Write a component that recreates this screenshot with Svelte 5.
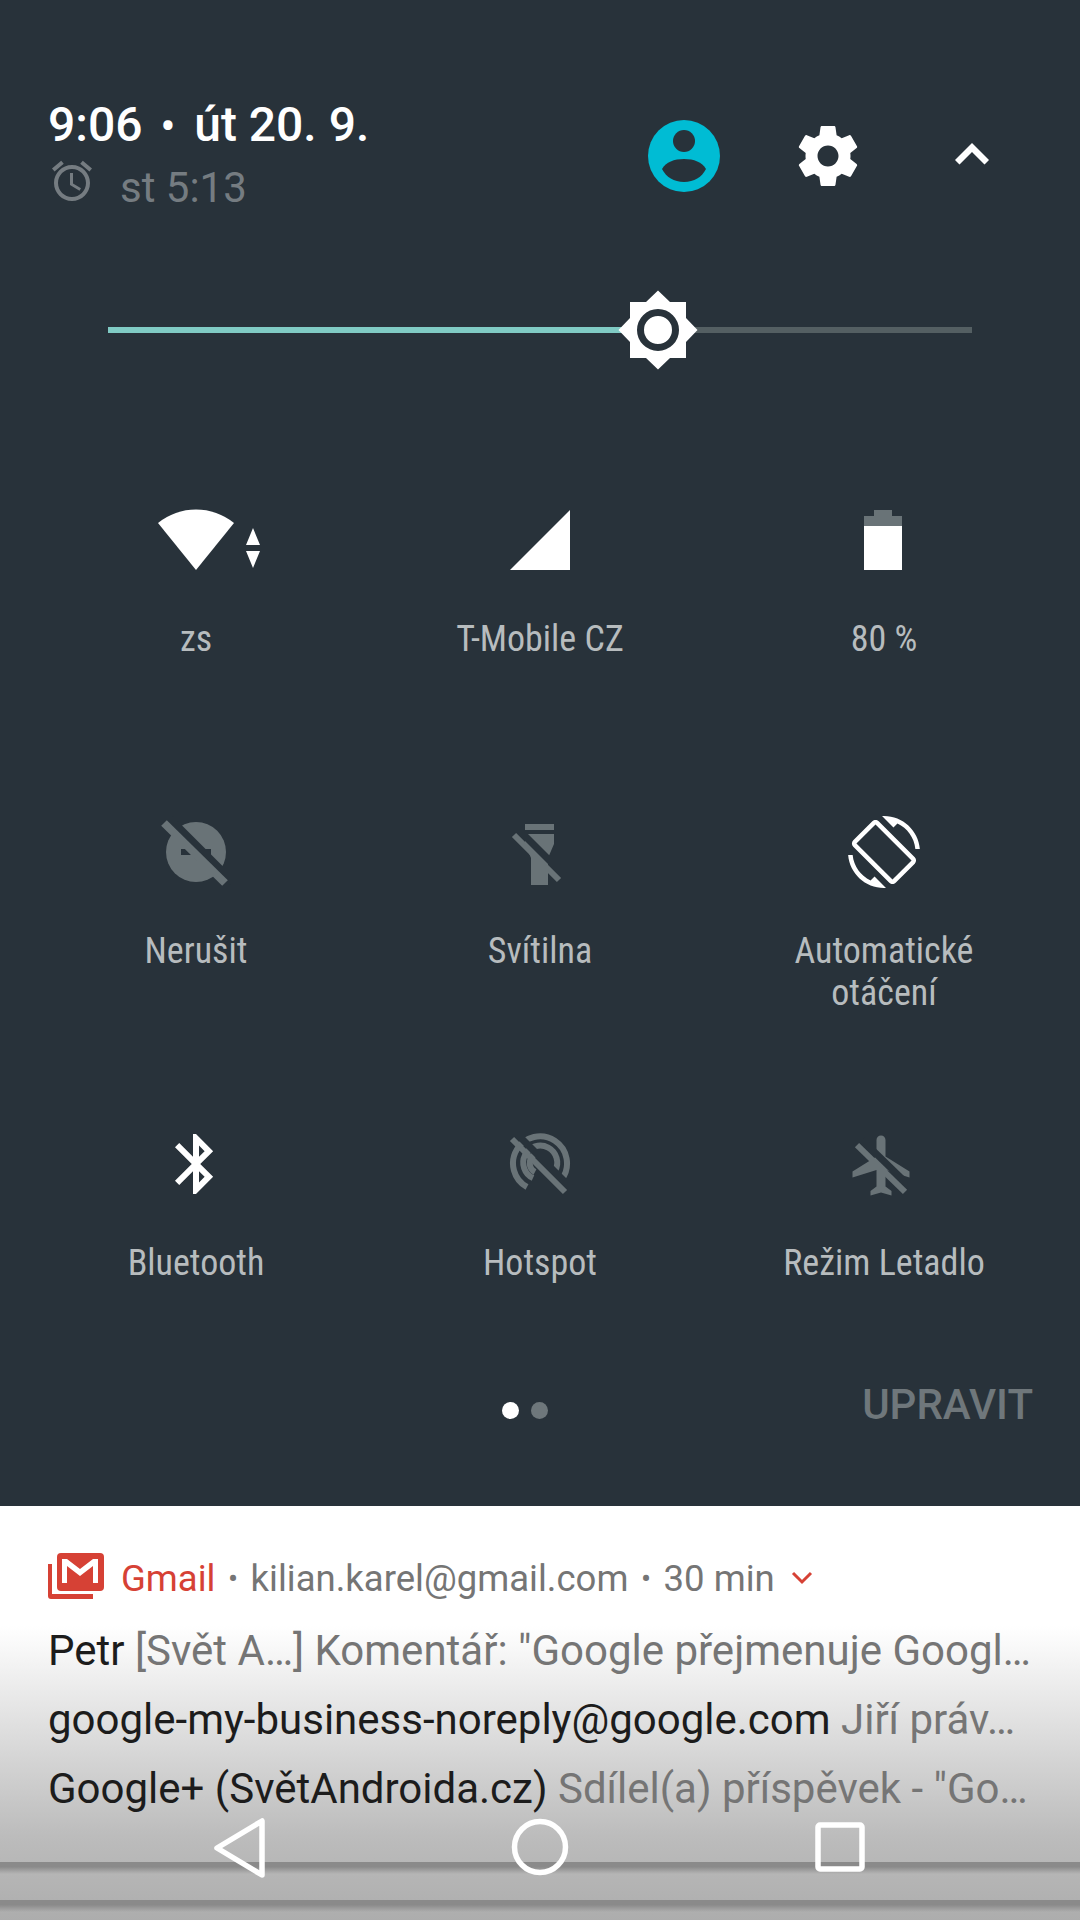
<script>
  const tiles = [
    { id: "wifi", label: "zs" },
    { id: "signal", label: "T-Mobile CZ" },
    { id: "battery", label: "80 %" },
    { id: "dnd", label: "Nerušit" },
    { id: "flash", label: "Svítilna" },
    { id: "rotate", label: "Automatické otáčení" },
    { id: "bluetooth", label: "Bluetooth" },
    { id: "hotspot", label: "Hotspot" },
    { id: "plane", label: "Režim Letadlo" },
  ];
  const rows = [
    { from: "Petr", text: "[Svět A…] Komentář: \"Google přejmenuje Googl…" },
    { from: "google-my-business-noreply@google.com", text: "Jiří práv…" },
    { from: "Google+ (SvětAndroida.cz)", text: "Sdílel(a) příspěvek - \"Go…" },
  ];
</script>

<div class="screen">
  <section class="panel">
    <header class="header">
      <div class="clock">
        <div class="time">9:06<span class="sep">•</span>út 20. 9.</div>
        <div class="alarm">
          <svg viewBox="0 0 24 24" width="48" height="48" fill="#757c81"><path d="M22 5.72l-4.6-3.86-1.29 1.53 4.6 3.86L22 5.72zM7.88 3.39L6.6 1.86 2 5.71l1.29 1.53 4.59-3.85zM12.5 8H11v6l4.75 2.85.75-1.23-4-2.37V8zM12 4c-4.97 0-9 4.03-9 9s4.02 9 9 9c4.97 0 9-4.03 9-9s-4.03-9-9-9zm0 16c-3.87 0-7-3.13-7-7s3.13-7 7-7 7 3.13 7 7-3.13 7-7 7z"/></svg>
          <span>st 5:13</span>
        </div>
      </div>
      <div class="actions">
        <svg viewBox="0 0 72 72" width="72" height="72">
          <circle cx="36" cy="36" r="36" fill="#00bcd4"/>
          <circle cx="36" cy="21" r="11" fill="#28323a"/>
          <path d="M14 49C18 42 26 39 36 39S54 42 58 49C54 57 46 62 36 62S18 57 14 49Z" fill="#28323a"/>
        </svg>
        <svg viewBox="0 0 24 24" width="72" height="72" fill="#fff"><path d="M19.43 12.98c.04-.32.07-.64.07-.98s-.03-.66-.07-.98l2.11-1.65c.19-.15.24-.42.12-.64l-2-3.46c-.12-.22-.39-.3-.61-.22l-2.49 1c-.52-.4-1.08-.73-1.69-.98l-.38-2.65C14.46 2.18 14.25 2 14 2h-4c-.25 0-.46.18-.49.42l-.38 2.65c-.61.25-1.17.59-1.69.98l-2.49-1c-.23-.09-.49 0-.61.22l-2 3.46c-.13.22-.07.49.12.64l2.11 1.65c-.04.32-.07.65-.07.98s.03.66.07.98l-2.11 1.65c-.19.15-.24.42-.12.64l2 3.46c.12.22.39.3.61.22l2.49-1c.52.4 1.08.73 1.69.98l.38 2.65c.03.24.24.42.49.42h4c.25 0 .46-.18.49-.42l.38-2.65c.61-.25 1.17-.59 1.69-.98l2.49 1c.23.09.49 0 .61-.22l2-3.46c.12-.22.07-.49-.12-.64l-2.11-1.65zM12 15.5c-1.93 0-3.5-1.57-3.5-3.5s1.57-3.5 3.5-3.5 3.5 1.57 3.5 3.5-1.57 3.5-3.5 3.5z"/></svg>
        <svg viewBox="0 0 72 72" width="72" height="72" fill="#fff"><path d="M36 23 53 40 48.500 44.500 36 32 23.500 44.500 19 40Z"/></svg>
      </div>
    </header>

    <div class="slider">
      <div class="track-on"></div>
      <div class="track-off"></div>
      <svg class="thumb" viewBox="0 0 80 80" width="80" height="80">
        <path d="M40 0.500 52 12H68V28L79.500 40 68 52V68H52L40 79.500 28 68H12V52L0.500 40 12 28V12H28Z" fill="#fff"/>
        <circle cx="40" cy="40" r="17.500" fill="#fff" stroke="#28323a" stroke-width="7"/>
      </svg>
    </div>

    <div class="tiles">
      {#each tiles as t}
        <div class="tile">
          <div class="icon">
            {#if t.id === "wifi"}
              <svg viewBox="0 0 72 72" width="72" height="72" fill="#fff">
                <path d="M36 66 -2 19A60.400 60.400 0 0 1 74 19Z"/>
                <path d="M93 24 100 41H86ZM86 47H100L93 64Z"/>
              </svg>
            {:else if t.id === "signal"}
              <svg viewBox="0 0 72 72" width="72" height="72" fill="#fff"><path d="M6 66 66 6V66Z"/></svg>
            {:else if t.id === "battery"}
              <svg viewBox="0 0 72 72" width="72" height="72">
                <path d="M26 6H44V12H54V22H16V12H26Z" fill="#697377"/>
                <rect x="16" y="22" width="38" height="44" fill="#fff"/>
              </svg>
            {:else if t.id === "dnd"}
              <svg viewBox="0 0 72 72" width="72" height="72">
                <circle cx="36" cy="36" r="30" fill="#697377"/>
                <path d="M21 33H51V39H21Z" fill="#28323a"/>
                <path d="M10 3 73 66" stroke="#28323a" stroke-width="8"/>
                <path d="M4 7 65 67" stroke="#697377" stroke-width="8"/>
              </svg>
            {:else if t.id === "flash"}
              <svg viewBox="0 0 72 72" width="72" height="72">
                <path d="M21 8H50V14H21ZM21 18H50V28L44 42V69H27V42L21 28Z" fill="#697377"/>
                <path d="M15 14 60 59" stroke="#28323a" stroke-width="7"/>
                <path d="M10 19 55 64" stroke="#697377" stroke-width="6"/>
              </svg>
            {:else if t.id === "rotate"}
              <svg viewBox="0 0 24 24" width="72" height="72" fill="#fff"><path d="M16.48 2.52c3.27 1.55 5.61 4.72 5.97 8.48h1.5C23.44 4.84 18.29 0 12 0l-.66.03 3.81 3.81 1.33-1.32zm-6.25-.77c-.59-.59-1.54-.59-2.12 0L1.75 8.11c-.59.59-.59 1.54 0 2.12l12.02 12.02c.59.59 1.54.59 2.12 0l6.36-6.36c.59-.59.59-1.54 0-2.12L10.23 1.75zm4.6 19.44L2.81 9.17l6.36-6.36 12.02 12.02-6.36 6.36zm-7.31.29C4.25 19.94 1.91 16.76 1.55 13H.05C.56 19.16 5.71 24 12 24l.66-.03-3.81-3.81-1.33 1.32z"/></svg>
            {:else if t.id === "bluetooth"}
              <svg viewBox="0 0 24 24" width="72" height="72" fill="#fff"><path d="M17.71 7.71L12 2h-1v7.59L6.41 5 5 6.41 10.59 12 5 17.59 6.41 19 11 14.41V22h1l5.71-5.71-4.3-4.29 4.3-4.29zM13 5.83l1.88 1.88L13 9.59V5.83zm1.88 10.46L13 18.17v-3.76l1.88 1.88z"/></svg>
            {:else if t.id === "hotspot"}
              <svg viewBox="0 0 72 72" width="72" height="72" fill="none" stroke="#697377" stroke-width="6">
                <path d="M23 59A27 27 0 1 1 58 51"/>
                <path d="M29 50A17 17 0 1 1 51 43"/>
                <path d="M31 44A10 10 0 0 1 30 27"/>
                <path d="M13 6 66 59" stroke="#28323a" stroke-width="7"/>
                <path d="M8 11 61 64"/>
              </svg>
            {:else if t.id === "plane"}
              <svg viewBox="0 0 24 24" width="72" height="72">
                <path d="M21 16v-2l-8-5V3.500c0-.83-.67-1.500-1.500-1.500S10 2.670 10 3.500V9l-8 5v2l8-2.500V19l-2 1.500V22l3.500-1 3.500 1v-1.500L13 19v-5.500l8 2.500z" fill="#697377" transform="translate(-.5 .5)"/>
                <path d="M4.700 4 20.700 19.600" stroke="#28323a" stroke-width="2.300"/>
                <path d="M3 5.700 19 21.300" stroke="#697377" stroke-width="2"/>
              </svg>
            {/if}
          </div>
          <div class="label">{t.label}</div>
        </div>
      {/each}
    </div>

    <footer class="panel-foot">
      <div class="dots"><i class="on"></i><i></i></div>
      <span class="edit">UPRAVIT</span>
    </footer>
  </section>

  <section class="notif">
    <div class="notif-head">
      <svg viewBox="0 0 56 48" width="56" height="48">
        <path d="M0 11H4V41H45V46H3Q0 46 0 43Z" fill="#d64135"/>
        <rect x="9" y="0" width="47" height="38" rx="4" fill="#d64135"/>
        <path d="M14 30V6H19L32 16 45 6H50V30H45V13L32 23 19 13V30Z" fill="#fff"/>
      </svg>
      <span class="app">Gmail</span>
      <span class="dot">•</span>
      <span>kilian.karel@gmail.com</span>
      <span class="dot">•</span>
      <span>30 min</span>
      <svg class="caret" viewBox="0 0 24 16" width="24" height="16"><path d="M3 3 12 12 21 3" fill="none" stroke="#d64135" stroke-width="3"/></svg>
    </div>
    {#each rows as r}
      <div class="row"><span class="from">{r.from}</span> {r.text}</div>
    {/each}
  </section>

  <div class="band band-a"></div>
  <div class="band band-b"></div>

  <nav class="navbar">
    <svg viewBox="0 0 60 64" width="60" height="64"><path d="M52 4V58L7 31Z" fill="none" stroke="#fff" stroke-width="5.500" stroke-linejoin="round"/></svg>
    <svg viewBox="0 0 60 60" width="60" height="60"><circle cx="30" cy="30" r="25.500" fill="none" stroke="#fff" stroke-width="5.500"/></svg>
    <svg viewBox="0 0 60 60" width="60" height="60"><rect x="8" y="8" width="44" height="44" rx="2" fill="none" stroke="#fff" stroke-width="5.500"/></svg>
  </nav>
</div>

<style>
  :global(body) {
    margin: 0;
    background: #28323a;
  }
  .screen {
    position: relative;
    width: 1080px;
    height: 1920px;
    overflow: hidden;
    display: flex;
    flex-direction: column;
    font-family: Roboto, "Liberation Sans", sans-serif;
  }
  .panel {
    height: 1506px;
    flex: none;
    background: #28323a;
    box-sizing: border-box;
    padding-top: 96px;
  }
  .header {
    display: flex;
    justify-content: space-between;
    padding: 0 72px 0 48px;
    height: 116px;
  }
  .time {
    color: #fff;
    font-size: 48px;
    font-weight: 500;
    line-height: 58px;
  }
  .sep {
    margin: 0 19px 0 18px;
    font-size: 42px;
  }
  .alarm {
    display: flex;
    align-items: center;
    color: #757c81;
    font-size: 42px;
    line-height: 50px;
    margin-top: 7px;
  }
  .alarm svg {
    margin-right: 24px;
    margin-top: -15px;
  }
  .actions {
    display: flex;
    gap: 72px;
    padding-top: 24px;
  }
  .slider {
    position: relative;
    display: flex;
    margin: 115px 108px 0;
    height: 6px;
  }
  .track-on {
    flex: none;
    width: 515px;
    background: #80cbc4;
  }
  .track-off {
    flex: 1;
    background: #545f62;
  }
  .thumb {
    position: absolute;
    left: 510px;
    top: -37px;
  }
  .tiles {
    display: grid;
    grid-template-columns: repeat(3, 344px);
    grid-auto-rows: 312px;
    margin: 171px 0 0 24px;
  }
  .tile {
    display: flex;
    flex-direction: column;
    align-items: center;
  }
  .icon {
    width: 72px;
    height: 72px;
  }
  .icon svg {
    display: block;
    overflow: visible;
  }
  .label {
    margin-top: 42px;
    width: 240px;
    text-align: center;
    color: #b7bcbe;
    font-size: 36px;
    line-height: 42px;
    font-stretch: 75%;
  }
  .panel-foot {
    position: relative;
    display: flex;
    justify-content: flex-end;
    align-items: center;
    height: 68px;
    margin-top: -70px;
    padding-right: 47px;
  }
  .dots {
    position: absolute;
    left: 502px;
    top: 32px;
    display: flex;
    gap: 12px;
  }
  .dots i {
    width: 17px;
    height: 17px;
    border-radius: 50%;
    background: #6e777b;
  }
  .dots i.on {
    background: #fff;
  }
  .edit {
    color: #6f777b;
    font-size: 42px;
    font-weight: 500;
  }
  .notif {
    flex: 1;
    padding: 44px 48px 0;
    color: #757575;
    background: linear-gradient(#fff 0, #fff 120px, #dedede 224px, #bcbcbc 330px, #adadad 414px);
  }
  .notif-head {
    display: flex;
    align-items: center;
    font-size: 36.500px;
    height: 56px;
  }
  .notif-head svg:first-child {
    margin-right: 17px;
    margin-top: -3px;
  }
  .app {
    color: #d64135;
  }
  .dot {
    margin: 0 12.500px;
    font-size: 30px;
  }
  .caret {
    margin-left: 15px;
  }
  .row {
    font-size: 42px;
    line-height: 69px;
    white-space: nowrap;
  }
  .notif-head + .row {
    margin-top: 10px;
  }
  .from {
    color: #1c1c1c;
  }
  .band {
    position: absolute;
    left: 0;
    right: 0;
    height: 12px;
    background: linear-gradient(#8a8a8a, #8a8a8a 40%, rgba(138, 138, 138, 0));
  }
  .band-a {
    top: 1862px;
  }
  .band-b {
    top: 1900px;
  }
  .navbar {
    position: absolute;
    left: 0;
    top: 1817px;
    width: 100%;
    display: grid;
    grid-template-columns: 60px 60px 60px;
    column-gap: 240px;
    justify-content: center;
  }
</style>
